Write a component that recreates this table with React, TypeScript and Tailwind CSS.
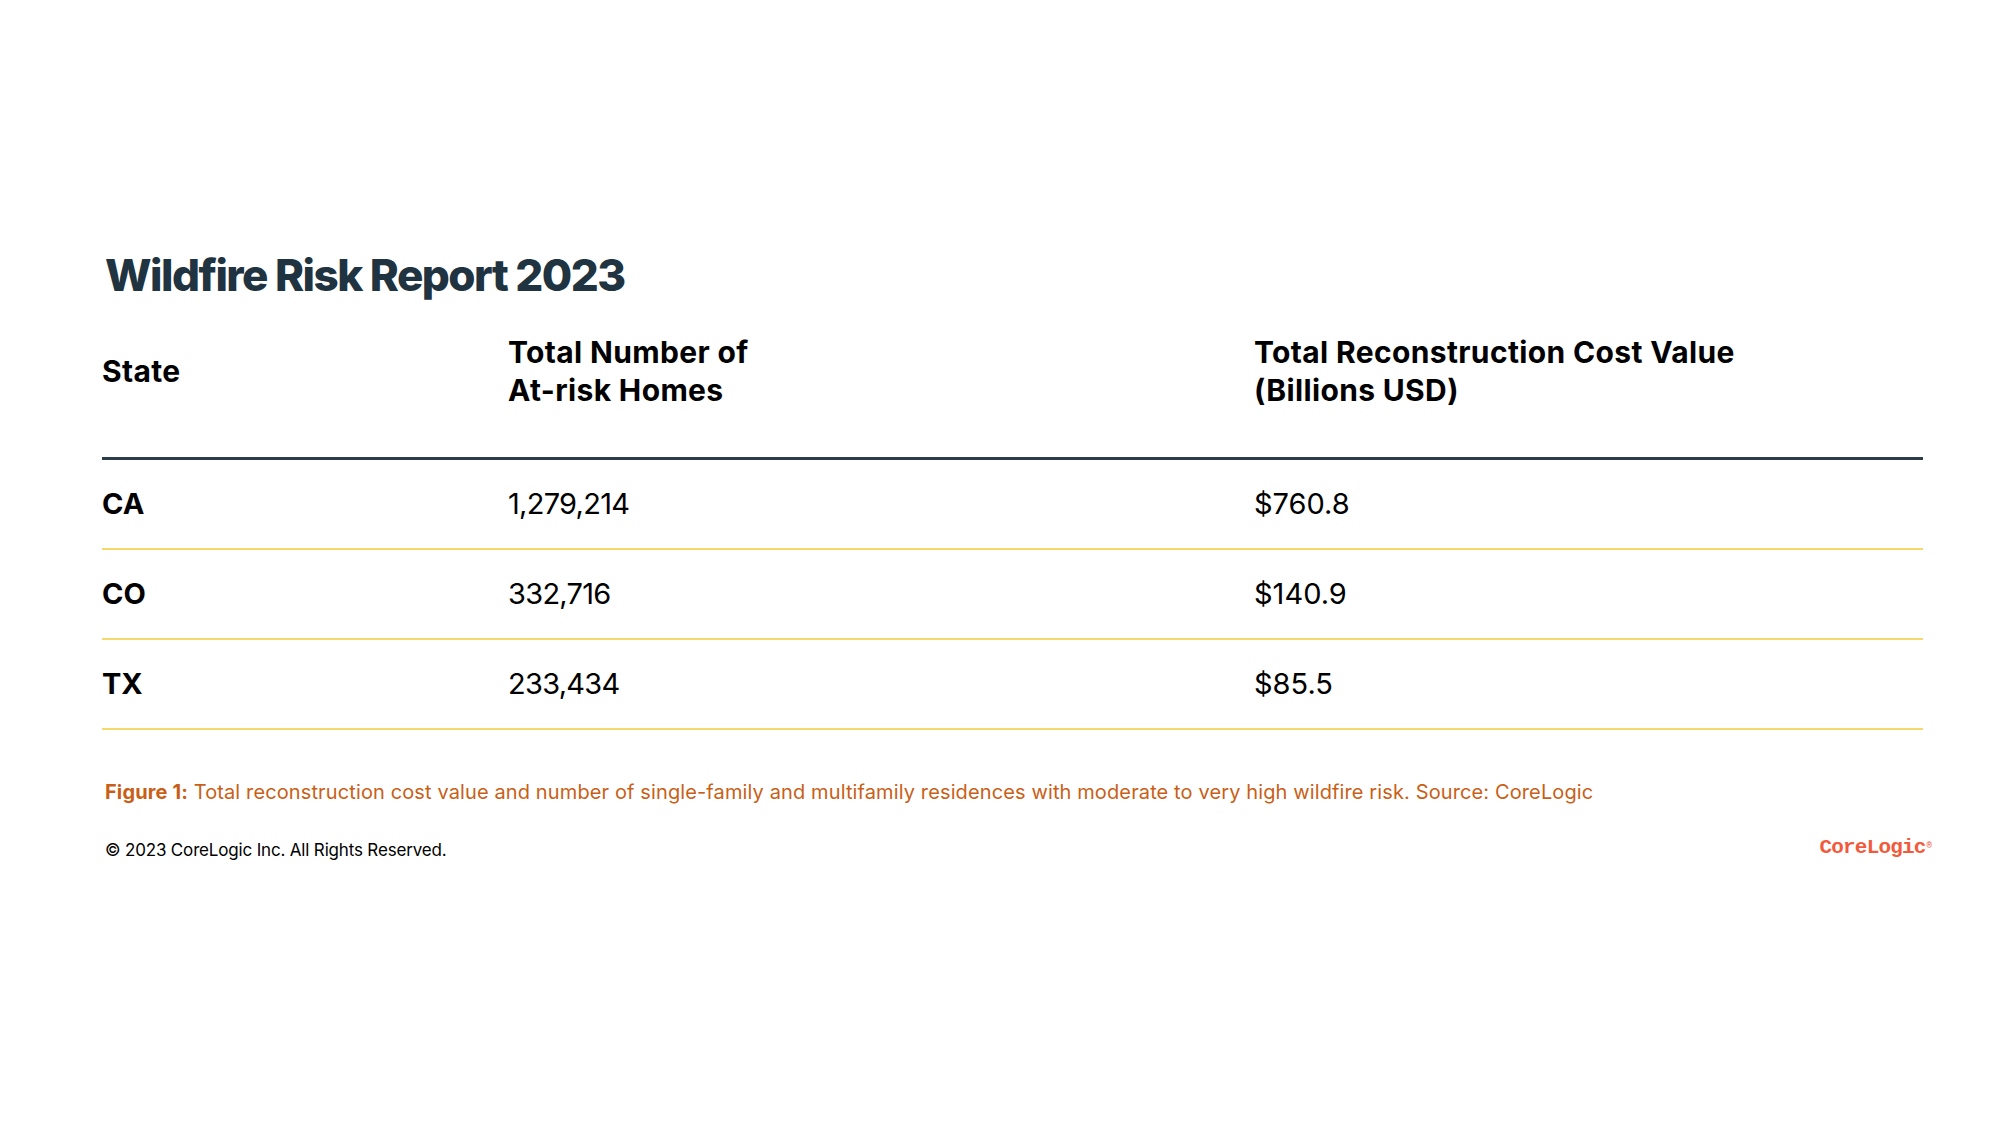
const rows = [
  { state: "CA", homes: "1,279,214", cost: "$760.8" },
  { state: "CO", homes: "332,716", cost: "$140.9" },
  { state: "TX", homes: "233,434", cost: "$85.5" },
];

export default function App() {
  return (
    <div className="w-[2000px] h-[1125px] bg-white font-['Inter',sans-serif] text-black">
      <div className="pt-[247px] pl-[102px] pr-[77px]">
        <h1 className="pl-[3px] text-[44px] leading-[56px] font-extrabold tracking-[-0.035em] text-[#1f3340]">
          Wildfire Risk Report 2023
        </h1>

        <div className="mt-[30px] grid grid-cols-[406px_746px_1fr] items-center pb-[48px] border-b-[3px] border-[#2b3d48] text-[30px] leading-[38px] font-bold tracking-[0.012em]">
          <div>State</div>
          <div>
            Total Number of
            <br />
            At-risk Homes
          </div>
          <div>
            Total Reconstruction Cost Value
            <br />
            (Billions USD)
          </div>
        </div>

        {rows.map((r) => (
          <div
            key={r.state}
            className="grid grid-cols-[406px_746px_1fr] items-center h-[90px] border-b-2 border-[#f6d96b] text-[29px]"
          >
            <div className="font-bold">{r.state}</div>
            <div className="tracking-[-0.025em]">{r.homes}</div>
            <div>{r.cost}</div>
          </div>
        ))}

        <p className="mt-[48px] pl-[3px] text-[20px] leading-[28px] tracking-[0.006em] text-[#c95f17]">
          <span className="font-bold">Figure 1:</span> Total reconstruction cost value and number of single-family and
          multifamily residences with moderate to very high wildfire risk. Source: CoreLogic
        </p>

        <div className="mt-[30px] flex items-end justify-between pl-[3px]">
          <p className="text-[17px] leading-[24px] tracking-[-0.01em] text-black">© 2023 CoreLogic Inc. All Rights Reserved.</p>
          <div className="flex items-start mr-[-8px] mb-[2px] font-['Liberation_Mono',monospace] text-[21px] leading-[24px] font-bold text-[#f25a3c] tracking-[-0.04em]">
            CoreLogic<span className="ml-[1px] text-[9px] leading-[10px] mt-[5px] font-normal">®</span>
          </div>
        </div>
      </div>
    </div>
  );
}
